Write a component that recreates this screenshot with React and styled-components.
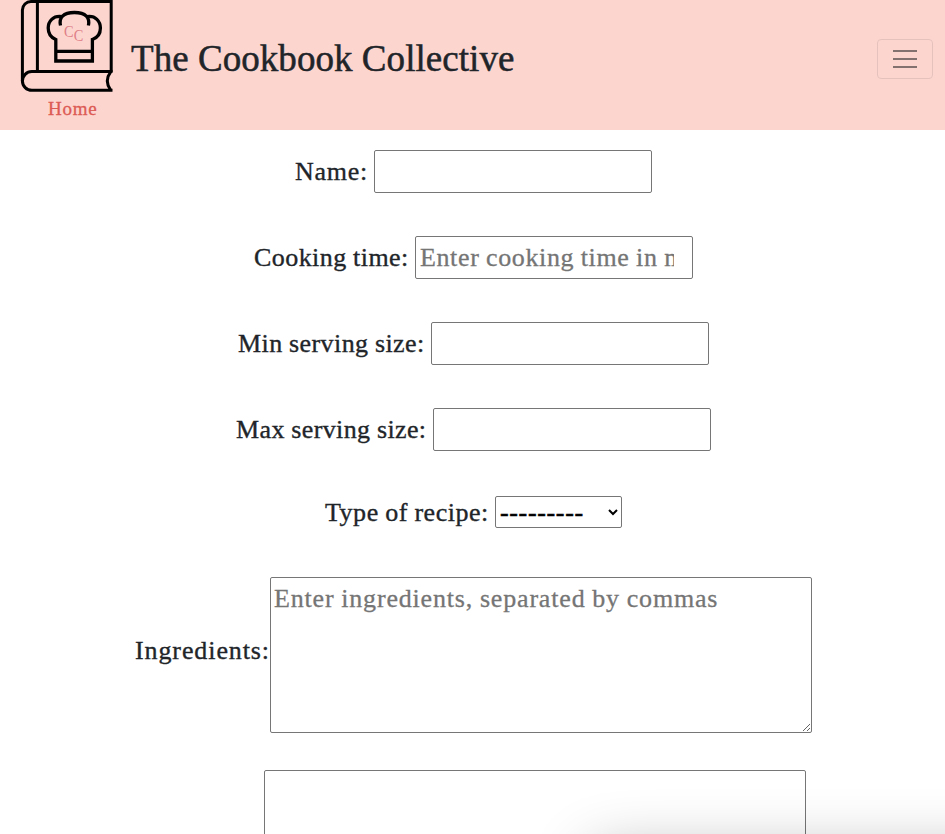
import React from "react";
import styled, { createGlobalStyle } from "styled-components";

const serif = `Georgia, "Liberation Serif", serif`;

const GlobalStyle = createGlobalStyle`
  *, *::before, *::after { box-sizing: border-box; }
  body {
    margin: 0;
    background: #fff;
    color: #212529;
    font-family: ${serif};
    overflow: hidden;
  }
`;

const Page = styled.div`
  height: 834px;
  overflow: hidden;
`;

const Header = styled.header`
  display: flex;
  justify-content: space-between;
  height: 130px;
  padding-right: 12px;
  background: #fdd5cf;
`;

const Brand = styled.div`
  display: flex;
`;

const HomeLink = styled.a`
  display: flex;
  flex-direction: column;
  width: 131px;
  color: #dc5b54;
  text-decoration: none;
`;

const HomeText = styled.span`
  padding-left: 48px;
  margin-top: 1px;
  font-size: 19px;
  line-height: 28px;
  letter-spacing: 0.75px;
  -webkit-text-stroke: 0.3px currentColor;
`;

const Title = styled.h1`
  margin: 0;
  padding-top: 36px;
  font-size: 37px;
  line-height: 46px;
  font-weight: 400;
  letter-spacing: 0.05px;
  white-space: nowrap;
  -webkit-text-stroke: 0.5px currentColor;
`;

const MenuButton = styled.button`
  display: grid;
  place-items: center;
  width: 56px;
  height: 40px;
  margin-top: 39px;
  padding: 0;
  border: 1px solid #e6c2bd;
  border-radius: 4px;
  background: transparent;
`;

const Form = styled.form`
  display: flex;
  flex-direction: column;
  padding-top: 20px;
`;

const Row = styled.div`
  display: flex;
  flex: none;
  justify-content: center;
  align-items: center;
  margin-bottom: ${(p) => p.$after}px;
`;

const Label = styled.label`
  width: ${(p) => p.$width}px;
  padding-left: 2px;
  padding-top: ${(p) => p.$drop || 0}px;
  padding-bottom: ${(p) => p.$lift || 0}px;
  font-size: 26px;
  line-height: 30px;
  letter-spacing: ${(p) => p.$tracking || 0}px;
  word-spacing: -0.5px;
  white-space: nowrap;
  -webkit-text-stroke: 0.35px currentColor;
`;

const Input = styled.input`
  width: 278px;
  height: 43px;
  padding: 1px 18px 1px 4px;
  border: 1px solid #767676;
  border-radius: 2px;
  font: 26px ${serif};
  letter-spacing: 0.62px;
  word-spacing: -0.5px;
  -webkit-text-stroke: 0.3px currentColor;
  &::placeholder { color: #757575; }
`;

const Select = styled.select`
  width: 127px;
  height: 32px;
  padding: 0 0 3px;
  border: 1px solid #767676;
  border-radius: 2px;
  background-color: #fff;
  color: #000;
  font: 26px ${serif};
  letter-spacing: 0.65px;
  -webkit-text-stroke: 0.5px currentColor;
`;

const TextArea = styled.textarea`
  display: block;
  width: 542px;
  height: 156px;
  padding: 2px 3px;
  border: 1px solid #767676;
  border-radius: 2px;
  font: 26px/37px ${serif};
  letter-spacing: 0.82px;
  word-spacing: -0.5px;
  -webkit-text-stroke: 0.3px currentColor;
  &::placeholder { color: #757575; }
`;

const BottomShadow = styled.div`
  position: fixed;
  left: 590px;
  top: 852px;
  width: 500px;
  height: 200px;
  border-radius: 16px;
  box-shadow: 0 0 60px rgba(0, 0, 0, 0.3);
  pointer-events: none;
`;

const LogoDrawing = styled.svg`
  display: block;
  flex: none;
`;

function Logo() {
  return (
    <LogoDrawing width="131" height="94" viewBox="0 0 131 94" fill="none" stroke="#000" strokeWidth="3">
      <path d="M111.2 72V1.5H31A8.6 8.6 0 0 0 22.4 10V81A9.4 9.4 0 0 0 31.8 90.3H112.5M37.4 1.5V71" />
      <path d="M22.4 81A9.4 9.4 0 0 1 31.8 71.6H112.5M110.8 71.6Q103.8 81 110.8 90.3" />
      <path d="M60.5 25.5C58.8 18 63 12.5 74.4 12.5C86 12.5 90 18 88.4 25.5M62 16.6C53 15.2 48.2 21.5 48.2 28C48.2 34.5 52 38 55.8 39.5V61H92.4V39.5C96.8 38 100.4 34.5 100.4 28C100.4 21.5 95.5 15.2 87 16.6M55.8 51.3H92.4" strokeWidth="3.3" />
      <g fill="#de8087" stroke="none" fontFamily="Liberation Serif, serif" fontSize="16">
        <text transform="translate(64 36.7) scale(.9 1)">C</text>
        <text transform="translate(73.8 41.1) scale(.9 1)">C</text>
      </g>
    </LogoDrawing>
  );
}

function MenuIcon() {
  return (
    <svg width="24" height="20" viewBox="0 0 24 20" stroke="#837170" strokeWidth="2">
      <path d="M0 2H24M0 10H24M0 18H24" />
    </svg>
  );
}

const fields = [
  { id: "name", label: "Name:", width: 81, tracking: 0.75, after: 43 },
  { id: "time", label: "Cooking time:", width: 163, tracking: 0.44, after: 43, placeholder: "Enter cooking time in minutes" },
  { id: "min", label: "Min serving size:", width: 195, tracking: 0.42, after: 43 },
  { id: "max", label: "Max serving size:", width: 199, tracking: 0.39, after: 45 },
];

export default function App() {
  return (
    <Page>
      <GlobalStyle />
      <Header>
        <Brand>
          <HomeLink href="#">
            <Logo />
            <HomeText>Home</HomeText>
          </HomeLink>
          <Title>The Cookbook Collective</Title>
        </Brand>
        <MenuButton type="button" aria-label="Menu">
          <MenuIcon />
        </MenuButton>
      </Header>
      <Form>
        {fields.map((f) => (
          <Row key={f.id} $after={f.after}>
            <Label htmlFor={f.id} $width={f.width} $tracking={f.tracking}>{f.label}</Label>
            <Input id={f.id} placeholder={f.placeholder} />
          </Row>
        ))}
        <Row $after={49}>
          <Label htmlFor="type" $width={172} $tracking={0.52} $drop={2}>Type of recipe:</Label>
          <Select id="type">
            <option>---------</option>
          </Select>
        </Row>
        <Row $after={37}>
          <Label htmlFor="ingredients" $width={137} $tracking={0.9} $lift={8}>Ingredients:</Label>
          <TextArea id="ingredients" placeholder="Enter ingredients, separated by commas" />
        </Row>
        <Row $after={0}>
          <Label htmlFor="method" $width={125} />
          <TextArea id="method" />
        </Row>
      </Form>
      <BottomShadow />
    </Page>
  );
}
